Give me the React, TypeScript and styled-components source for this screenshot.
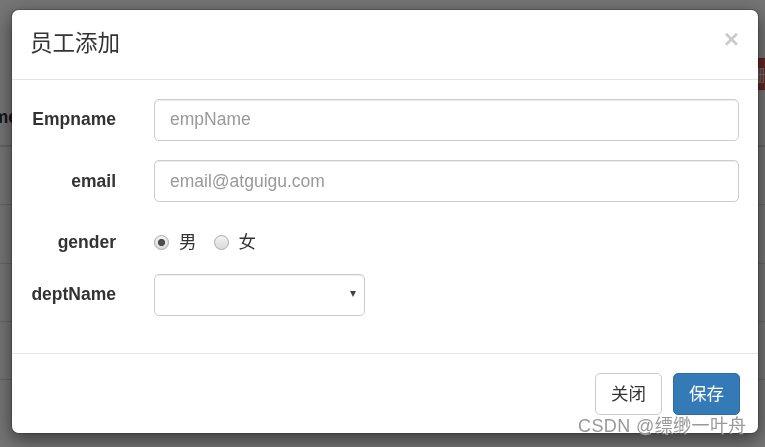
import React from "react";
import styled, { createGlobalStyle } from "styled-components";

const GlobalStyle = createGlobalStyle`
  html, body { margin: 0; padding: 0; }
  body {
    width: 765px;
    height: 447px;
    overflow: hidden;
    background: #fff;
    font-family: "Liberation Sans", Arial, "Noto Sans CJK SC", sans-serif;
    font-size: 17.5px;
    color: #333;
  }
  * { box-sizing: border-box; }
`;

const CJK = `"Liberation Sans", Arial, "Noto Sans CJK SC", sans-serif`;

/* ---------- page behind the dialog ---------- */
const Page = styled.div`
  display: flex;
  flex-direction: column;
  padding-top: 58px;
`;

const Toolbar = styled.div`
  display: flex;
  justify-content: flex-end;
  height: 32px;
  margin-right: -60px;
`;

const DangerButton = styled.button`
  width: 80px;
  height: 32px;
  padding: 0 8px;
  text-align: left;
  background: #d9534f;
  border: 1px solid #d43f3a;
  border-radius: 4px;
  color: #fff;
  font-family: ${CJK};
  font-size: 16px;
`;

const Table = styled.div`
  display: flex;
  flex-direction: column;
`;

const HeadRow = styled.div`
  display: flex;
  align-items: center;
  height: 57px;
  border-bottom: 2px solid #ddd;
  font-weight: bold;
  color: #333;
`;

const HeadCell = styled.div`
  width: 18px;
  display: flex;
  justify-content: flex-end;
  white-space: nowrap;
`;

const BodyRow = styled.div`
  height: 58.3px;
  border-bottom: 1px solid #ddd;
`;

/* ---------- dialog ---------- */
const Backdrop = styled.div`
  position: fixed;
  inset: 0;
  background: rgba(0, 0, 0, 0.54);
`;

const Dialog = styled.div`
  position: fixed;
  top: 9px;
  left: 11px;
  width: 748px;
  display: flex;
  flex-direction: column;
  background: #fff;
  background-clip: padding-box;
  border: 1px solid rgba(0, 0, 0, 0.2);
  border-radius: 7.5px;
  box-shadow: 0 6px 19px rgba(0, 0, 0, 0.5);
`;

const Header = styled.div`
  display: flex;
  justify-content: space-between;
  align-items: flex-start;
  padding: 18px 19px 19px 18px;
  border-bottom: 1px solid #e5e5e5;
`;

const Title = styled.h4`
  margin: 0;
  font-family: ${CJK};
  font-size: 22.5px;
  font-weight: 400;
  line-height: 32px;
  color: #333;
`;

const CloseButton = styled.button`
  margin-top: -2px;
  padding: 0;
  border: 0;
  background: transparent;
  font-family: "Liberation Sans", Arial, sans-serif;
  font-size: 26.25px;
  font-weight: bold;
  line-height: 1;
  color: #000;
  opacity: 0.2;
  cursor: pointer;
`;

const Body = styled.form`
  display: flex;
  flex-direction: column;
  gap: 18.75px;
  padding: 18.5px 19px 37px 19px;
`;

const FormRow = styled.div`
  display: grid;
  grid-template-columns: 85px 1fr;
  column-gap: 38px;
  align-items: center;
`;

const Label = styled.label`
  text-align: right;
  font-weight: bold;
  font-size: 17.5px;
  line-height: 25px;
  color: #333;
`;

const TextInput = styled.input`
  height: 42.5px;
  width: 100%;
  padding: 7.5px 15px;
  border: 1px solid #ccc;
  border-radius: 5px;
  box-shadow: inset 0 1px 1px rgba(0, 0, 0, 0.075);
  font-family: "Liberation Sans", Arial, sans-serif;
  font-size: 17.5px;
  color: #555;
  outline: none;
  &::placeholder { color: #999; }
`;

const RadioRow = styled(FormRow)`
  padding-top: 8.75px;
`;

const RadioGroup = styled.div`
  display: flex;
  align-items: center;
  gap: 17px;
  height: 25px;
`;

const RadioItem = styled.label`
  display: flex;
  align-items: center;
  gap: 10px;
  font-family: ${CJK};
  font-size: 17.5px;
  line-height: 25px;
  color: #333;
`;

const Radio = styled.input`
  appearance: none;
  margin: 0;
  width: 15px;
  height: 15px;
  border-radius: 50%;
  border: 1px solid #a9a9a9;
  background: linear-gradient(180deg, #f3f3f3, #d9d9d9);
  &:checked {
    background: radial-gradient(circle at center, #4d4d4d 0 3.3px, transparent 3.9px),
      linear-gradient(180deg, #f3f3f3, #d9d9d9);
  }
`;

const SelectWrap = styled.div`
  position: relative;
  width: 211px;
`;

const Select = styled.select`
  appearance: none;
  width: 100%;
  height: 42.5px;
  padding: 7.5px 15px;
  border: 1px solid #ccc;
  border-radius: 5px;
  background: #fff;
  box-shadow: inset 0 1px 1px rgba(0, 0, 0, 0.075);
  font-family: ${CJK};
  font-size: 17.5px;
  color: #555;
  outline: none;
`;

const Caret = styled.span`
  position: absolute;
  right: 9px;
  top: 17.5px;
  width: 0;
  height: 0;
  border-left: 3.5px solid transparent;
  border-right: 3.5px solid transparent;
  border-top: 6px solid #444;
  pointer-events: none;
`;

const Footer = styled.div`
  display: flex;
  justify-content: flex-end;
  gap: 11px;
  padding: 18.75px 18px 18px;
  border-top: 1px solid #e5e5e5;
`;

const Button = styled.button<{ $primary?: boolean }>`
  height: 42.5px;
  padding: 0 15px;
  border-radius: 5px;
  border: 1px solid ${(p) => (p.$primary ? "#2e6da4" : "#ccc")};
  background: ${(p) => (p.$primary ? "#337ab7" : "#fff")};
  color: ${(p) => (p.$primary ? "#fff" : "#333")};
  font-family: ${CJK};
  font-size: 17.5px;
  line-height: 25px;
  cursor: pointer;
`;

const Watermark = styled.div`
  position: fixed;
  top: 416px;
  left: 578px;
  font-family: ${CJK};
  font-size: 18px;
  line-height: 20px;
  letter-spacing: 0.4px;
  color: #999;
  text-shadow: 1px 1px 0 rgba(255, 255, 255, 0.45);
  white-space: nowrap;
  pointer-events: none;
`;

export default function App() {
  return (
    <>
      <GlobalStyle />
      <Page>
        <Toolbar>
          <DangerButton type="button">删除</DangerButton>
        </Toolbar>
        <Table>
          <HeadRow>
            <HeadCell>empName</HeadCell>
          </HeadRow>
          <BodyRow />
          <BodyRow />
          <BodyRow />
          <BodyRow />
        </Table>
      </Page>
      <Backdrop />
      <Dialog role="dialog">
        <Header>
          <Title>员工添加</Title>
          <CloseButton type="button" aria-label="Close">×</CloseButton>
        </Header>
        <Body onSubmit={(e) => e.preventDefault()}>
          <FormRow>
            <Label>Empname</Label>
            <TextInput type="text" placeholder="empName" />
          </FormRow>
          <FormRow>
            <Label>email</Label>
            <TextInput type="text" placeholder="email@atguigu.com" />
          </FormRow>
          <RadioRow>
            <Label>gender</Label>
            <RadioGroup>
              <RadioItem>
                <Radio type="radio" name="gender" defaultChecked />
                男
              </RadioItem>
              <RadioItem>
                <Radio type="radio" name="gender" />
                女
              </RadioItem>
            </RadioGroup>
          </RadioRow>
          <FormRow>
            <Label>deptName</Label>
            <SelectWrap>
              <Select defaultValue="">
                <option value=""></option>
              </Select>
              <Caret />
            </SelectWrap>
          </FormRow>
        </Body>
        <Footer>
          <Button type="button">关闭</Button>
          <Button type="button" $primary>保存</Button>
        </Footer>
      </Dialog>
      <Watermark>CSDN @缥缈一叶舟</Watermark>
    </>
  );
}
